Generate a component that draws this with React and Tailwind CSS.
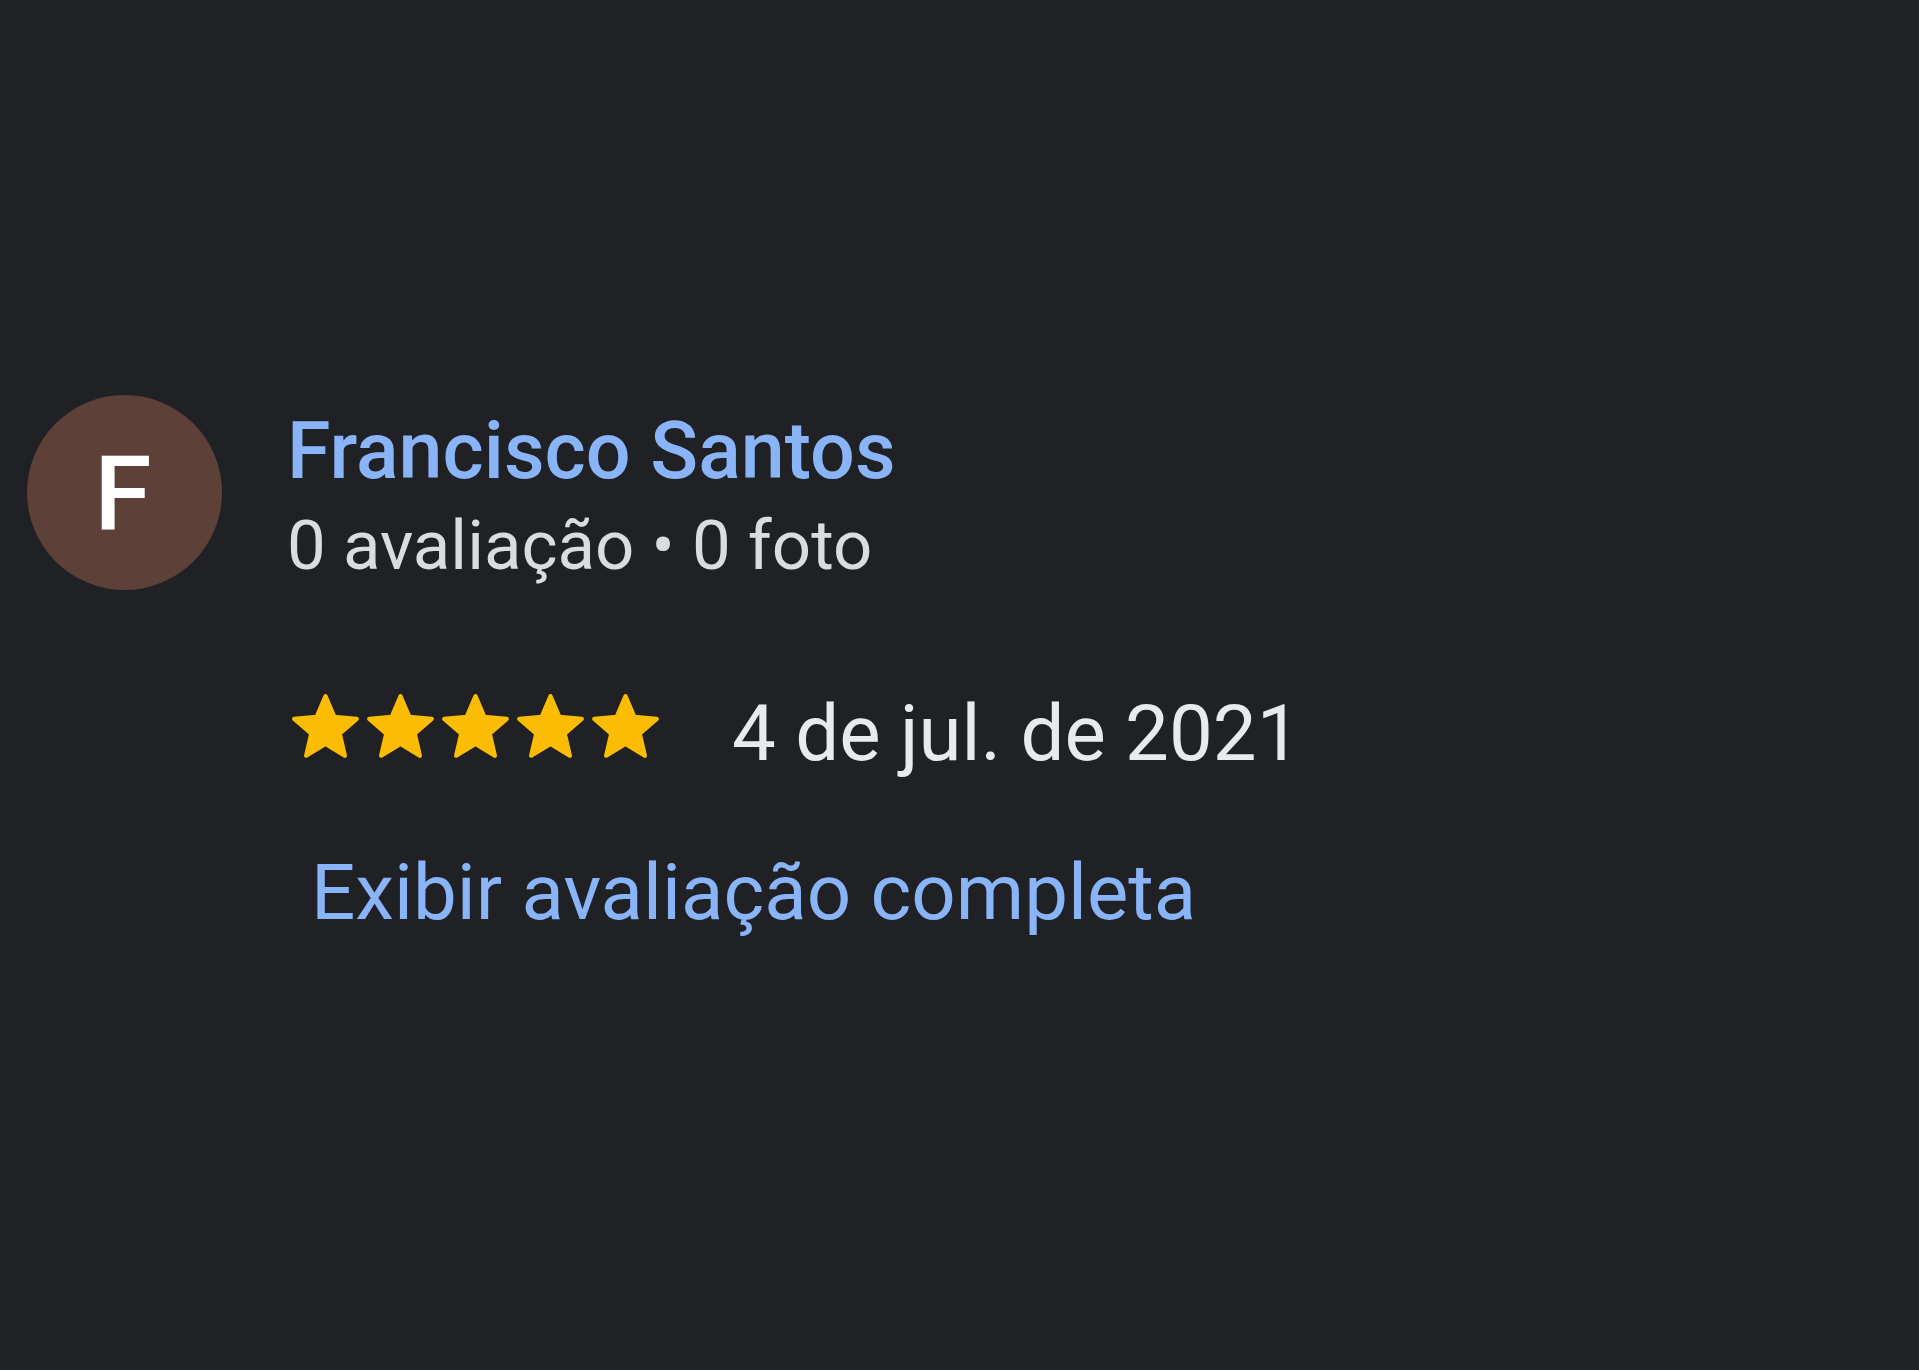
import React from "react";

const Star = () => (
  <svg viewBox="0 0 24 24" className="w-[75px] h-[75px] shrink-0" fill="#fbbc04">
    <path
      d="M12 17.27L18.18 21l-1.64-7.03L22 9.24l-7.19-.61L12 2 9.19 8.63 2 9.24l5.46 4.73L5.82 21z"
      stroke="#fbbc04"
      strokeWidth="1.4"
      strokeLinejoin="round"
    />
  </svg>
);

export default function App() {
  return (
    <div
      className="min-h-[1370px] w-full bg-[#202124] pt-[395px] pl-[27px]"
      style={{ fontFamily: "Roboto, 'Liberation Sans', sans-serif" }}
    >
      <div className="flex items-start">
        <div className="w-[195px] h-[195px] rounded-full bg-[#5d4037] flex items-center justify-center shrink-0">
          <span className="text-[104px] leading-none text-white font-medium pt-[4px] pr-[3px]">F</span>
        </div>
        <div className="ml-[65px] mt-[17px] flex flex-col items-start">
          <div className="text-[79px] leading-[78px] font-medium text-[#8ab4f8] whitespace-nowrap">
            Francisco Santos
          </div>
          <div className="mt-[22px] text-[69px] leading-[68px] text-[#dadce0] whitespace-nowrap">
            0 avaliação • 0 foto
          </div>
          <div className="mt-[110px] flex items-start">
            <div className="flex pl-[1px]">
              <Star />
              <Star />
              <Star />
              <Star />
              <Star />
            </div>
            <div className="ml-[69px] mt-[5px] text-[78px] leading-[78px] text-[#e8eaed] whitespace-nowrap">
              4 de jul. de 2021
            </div>
          </div>
          <div className="mt-[80px] ml-[24px] text-[78px] leading-[80px] text-[#8ab4f8] whitespace-nowrap">
            Exibir avaliação completa
          </div>
        </div>
      </div>
    </div>
  );
}
